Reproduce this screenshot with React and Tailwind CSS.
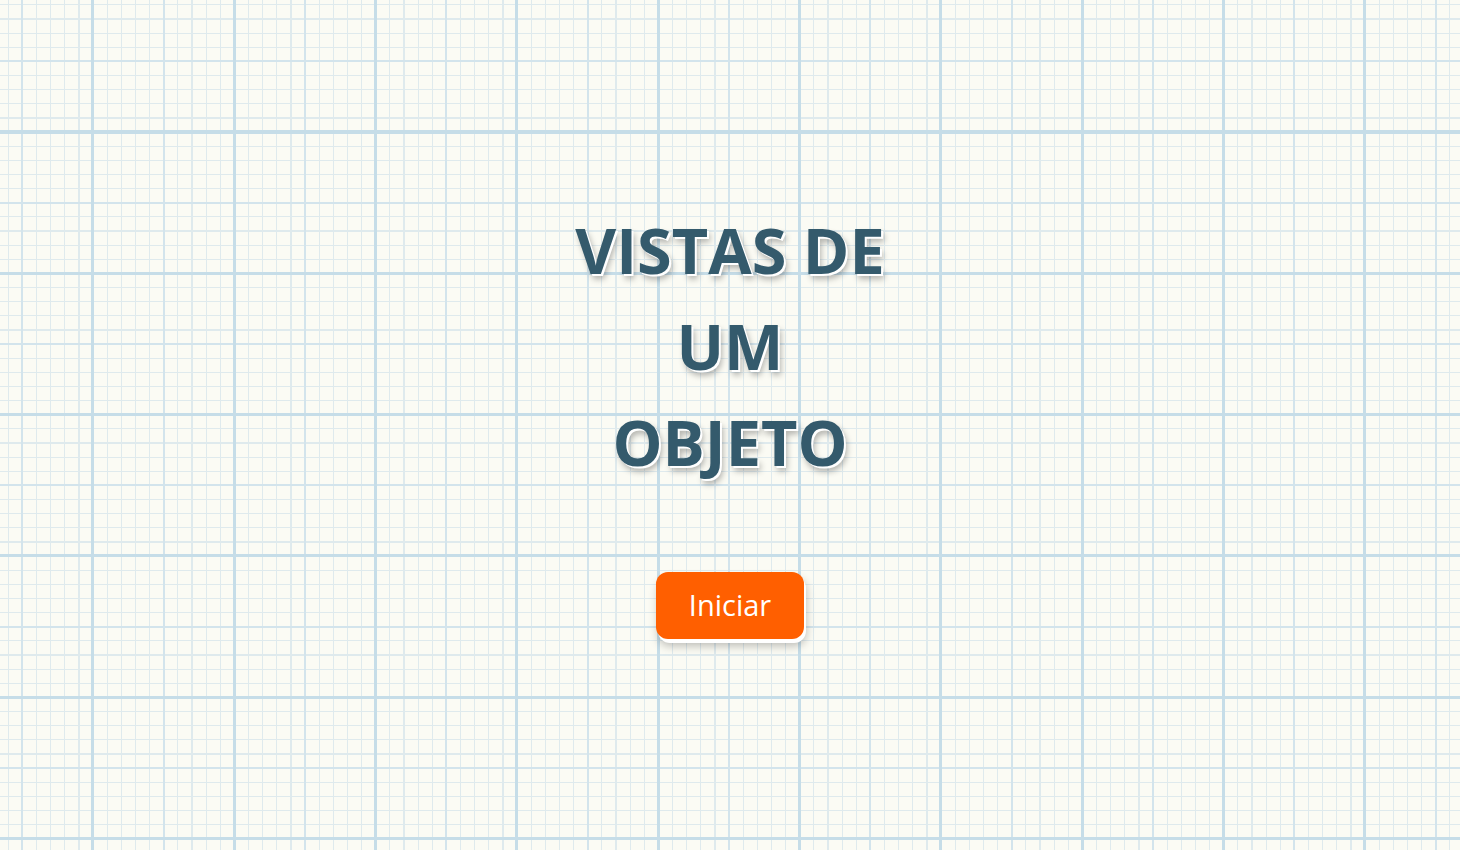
export default function App() {
  return (
    <div
      className="flex min-h-screen w-full flex-col items-center justify-center bg-[#fbfbf4] pb-[10px] [background-image:repeating-linear-gradient(90deg,transparent_0_91.5px,#c6dde8_91.5px_94.5px,transparent_94.5px_141.33px),repeating-linear-gradient(180deg,transparent_0_130.5px,#c6dde8_130.5px_133.5px,transparent_133.5px_141.33px),repeating-linear-gradient(90deg,transparent_0_21.4px,#d3e4ec_21.4px_23.4px,transparent_23.4px_141.33px),repeating-linear-gradient(180deg,transparent_0_60.3px,#d3e4ec_60.3px_62.3px,transparent_62.3px_141.33px),repeating-linear-gradient(90deg,transparent_0_7.7px,#dfeaed_7.7px_8.9px,transparent_8.9px_14.133px),repeating-linear-gradient(180deg,transparent_0_4.3px,#dfeaed_4.3px_5.5px,transparent_5.5px_14.133px)]"
      style={{ fontFamily: '"Open Sans", "Noto Sans", sans-serif' }}
    >
      <h1 className="text-center text-[63px] font-[750] leading-[96px] text-[#345a6c] [text-shadow:2px_2px_0_#ffffff,3px_5px_6px_rgba(0,0,0,0.3)]">
        VISTAS DE
        <br />
        UM
        <br />
        OBJETO
      </h1>
      <button className="mt-[82px] h-[67px] w-[148px] rounded-[12px] bg-[#ff5f00] text-[29px] text-white shadow-[2px_4px_0_#ffffff,2px_7px_10px_rgba(0,0,0,0.25)]">
        Iniciar
      </button>
    </div>
  );
}
